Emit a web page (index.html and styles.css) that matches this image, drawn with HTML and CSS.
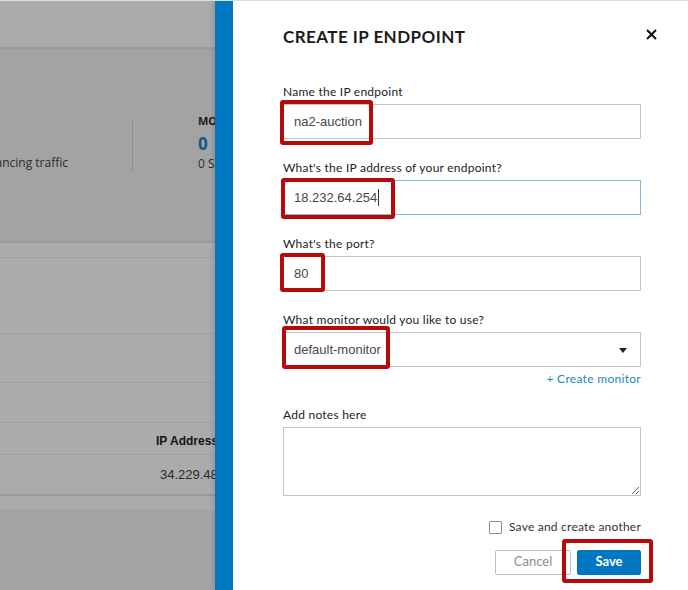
FILE: index.html
```html
<!DOCTYPE html>
<html lang="en">
<head>
<meta charset="utf-8">
<title>Create IP Endpoint</title>
<link rel="stylesheet" href="styles.css">
</head>
<body>
<div class="app">
  <div class="backdrop">
    <div class="bd-header"></div>
    <div class="bd-stats">
      <div class="stat stat-first"><span class="stat-sub">Load balancing traffic</span></div>
      <div class="stat stat-second">
        <div class="stat-title">MONITORS</div>
        <div class="stat-num">0</div>
        <div class="stat-sub">0 Servers</div>
      </div>
    </div>
    <div class="bd-band"></div>
    <div class="bd-sec bd-sec-a"></div>
    <div class="bd-sec bd-sec-b"></div>
    <div class="bd-sec bd-sec-c"></div>
    <div class="bd-thead"><span class="th">IP Address</span></div>
    <div class="bd-trow"><span class="td">34.229.48.110</span></div>
    <div class="bd-band bd-band-2"></div>
    <div class="bd-bottom"></div>
  </div>

  <aside class="panel">
    <div class="panel-header">
      <h1 class="panel-title">CREATE IP ENDPOINT</h1>
      <button class="close" type="button" aria-label="Close">
        <svg width="11" height="11" viewBox="0 0 11 11"><path d="M1 1 L10 10 M10 1 L1 10" stroke="#111" stroke-width="2" fill="none"/></svg>
      </button>
    </div>

    <div class="form">
      <div class="field">
        <div class="label">Name the IP endpoint</div>
        <div class="input">na2-auction<span class="mark mark-1"></span></div>
      </div>
      <div class="field">
        <div class="label">What's the IP address of your endpoint?</div>
        <div class="input input-focus">18.232.64.254<span class="caret"></span><span class="mark mark-2"></span></div>
      </div>
      <div class="field">
        <div class="label">What's the port?</div>
        <div class="input">80<span class="mark mark-3"></span></div>
      </div>
      <div class="field field-select">
        <div class="label">What monitor would you like to use?</div>
        <div class="input select">
          <span>default-monitor</span>
          <svg class="tri" width="8" height="5" viewBox="0 0 8 5"><path d="M0 0 H8 L4 5 Z" fill="#222"/></svg>
          <span class="mark mark-4"></span>
        </div>
        <div class="link-row"><span class="link">+ Create monitor</span></div>
      </div>
      <div class="field field-notes">
        <div class="label">Add notes here</div>
        <textarea class="notes"></textarea>
      </div>
      <div class="check-row">
        <span class="checkbox"></span>
        <span class="check-label">Save and create another</span>
      </div>
      <div class="btn-row">
        <button class="btn btn-cancel" type="button">Cancel</button>
        <button class="btn btn-save" type="button">Save<span class="mark mark-5"></span></button>
      </div>
    </div>
  </aside>
</div>
</body>
</html>
```

FILE: styles.css
```css
* { box-sizing: border-box; }

html, body {
  margin: 0;
  padding: 0;
  height: 590px;
  overflow: hidden;
}

body {
  border-top: 1px solid #dedede;
  background: #ffffff;
  font-family: "Lato", "Open Sans", sans-serif;
}

.app {
  display: flex;
  height: 589px;
}

/* ---------- dimmed page behind the panel ---------- */
.backdrop {
  width: 215px;
  flex: none;
  overflow: hidden;
  display: flex;
  flex-direction: column;
  background: #ababab;
  font-family: "Open Sans", sans-serif;
  color: #2c2c2c;
}

.bd-header {
  height: 48px;
  flex: none;
  background: #ababab;
  border-bottom: 2px solid #9b9b9b;
}

.bd-stats {
  height: 194px;
  flex: none;
  background: #a3a3a3;
  border-bottom: 2px solid #999999;
  display: flex;
  align-items: flex-start;
  padding-top: 65px;
}

.stat-first {
  width: 133px;
  flex: none;
  height: 51px;
  margin-top: 6px;
  border-right: 1px solid #8d8d8d;
  padding-right: 64px;
  display: flex;
  justify-content: flex-end;
  align-items: flex-end;
  white-space: nowrap;
}

.stat-second {
  margin-left: 65px;
  white-space: nowrap;
}

.stat-title {
  font-size: 11px;
  line-height: 14px;
  font-weight: 700;
  color: #1c1c1c;
}

.stat-num {
  font-size: 17px;
  line-height: 20px;
  font-weight: 700;
  color: #0e5a8e;
  margin-top: 6px;
}

.stat-sub {
  font-size: 12px;
  line-height: 16px;
  color: #2c2c2c;
}

.stat-second .stat-sub { margin-top: 2px; }

.bd-band {
  height: 15px;
  flex: none;
  background: #ababab;
  border-bottom: 1px solid #9f9f9f;
}

.bd-sec {
  flex: none;
  background: #ababab;
  border-bottom: 1px solid #9f9f9f;
}
.bd-sec-a { height: 76px; }
.bd-sec-b { height: 49px; }
.bd-sec-c { height: 40px; }

.bd-thead {
  height: 32px;
  flex: none;
  border-bottom: 1px solid #9f9f9f;
  padding: 8px 0 0 156px;
  white-space: nowrap;
  font-family: "Liberation Sans", Arial, sans-serif;
}

.th {
  font-size: 12px;
  line-height: 15px;
  font-weight: 700;
  color: #141414;
}

.bd-trow {
  height: 41px;
  flex: none;
  border-bottom: 2px solid #9a9a9a;
  padding: 10px 0 0 160px;
  white-space: nowrap;
  font-family: "Liberation Sans", Arial, sans-serif;
}

.td {
  font-size: 13px;
  line-height: 15px;
  color: #2a2a2a;
}

.bd-band-2 { height: 15px; }

.bd-bottom {
  flex: 1;
  background: #a3a3a3;
}

/* ---------- side panel ---------- */
.panel {
  flex: 1;
  background: #ffffff;
  border-left: 18px solid #0077c0;
  box-shadow: -2px 0 4px rgba(0, 0, 0, 0.12);
  padding: 26px 47px 0 50px;
  color: #222222;
}

.panel-header {
  display: flex;
  justify-content: space-between;
  align-items: flex-start;
  height: 20px;
}

.panel-title {
  margin: 0;
  font-size: 17px;
  line-height: 20px;
  font-weight: 700;
  letter-spacing: 0.45px;
  color: #1b1b1b;
}

.close {
  border: 0;
  background: none;
  padding: 0;
  margin: 2px -16px 0 0;
  width: 11px;
  height: 11px;
  display: block;
  cursor: pointer;
}
.close svg { display: block; }

.form { margin-top: 37px; }

.field { margin-bottom: 21px; }

.label {
  font-size: 12px;
  line-height: 16px;
  letter-spacing: 0.24px;
  color: #222222;
  margin-bottom: 4px;
}

.input {
  position: relative;
  height: 35px;
  border: 1px solid #c6c6c6;
  padding: 0 10px;
  display: flex;
  align-items: center;
  font-family: "Liberation Sans", Arial, sans-serif;
  font-size: 13px;
  color: #474747;
  background: #ffffff;
}

.input-focus { border-color: #86b8dc; }

.caret {
  width: 1px;
  height: 17px;
  background: #333333;
  margin-left: 1px;
}

.select {
  justify-content: space-between;
  padding-right: 13px;
}
.tri { display: block; margin-top: 2px; }

.field-select { margin-bottom: 20px; }

.link-row {
  margin-top: 4px;
  display: flex;
  justify-content: flex-end;
}
.link {
  font-size: 12px;
  line-height: 16px;
  letter-spacing: 0.3px;
  color: #1a86c9;
}

.field-notes { margin-bottom: 0; }

.notes {
  display: block;
  width: 100%;
  height: 69px;
  border: 1px solid #c6c6c6;
  border-radius: 0;
  margin: 0;
  resize: vertical;
  font-family: inherit;
  font-size: 13px;
  outline: none;
}

.check-row {
  margin-top: 23px;
  display: flex;
  justify-content: flex-end;
  align-items: center;
  gap: 7px;
  height: 16px;
}

.checkbox {
  width: 13px;
  height: 13px;
  border: 1px solid #8f8f8f;
  border-radius: 1px;
  background: #fff;
}

.check-label {
  font-size: 12px;
  line-height: 16px;
  letter-spacing: 0.22px;
  color: #333333;
}

.btn-row {
  margin-top: 15px;
  display: flex;
  justify-content: flex-end;
  gap: 6px;
}

.btn {
  position: relative;
  height: 25px;
  border-radius: 2px;
  font-family: inherit;
  font-size: 13px;
  line-height: 21px;
  padding: 0 0 2px;
  cursor: pointer;
}

.btn-cancel {
  width: 76px;
  background: #ffffff;
  border: 1px solid #bdbdbd;
  color: #8e8e8e;
}

.btn-save {
  width: 64px;
  background: #0077c0;
  border: 1px solid #0077c0;
  color: #ffffff;
  font-weight: 700;
}

/* ---------- red annotation boxes ---------- */
.mark {
  position: absolute;
  border: 4px solid #b60a0a;
  border-radius: 3px;
  pointer-events: none;
}
.mark-1 { left: -4px; top: -5px; width: 93px; height: 45px; }
.mark-2 { left: -3px; top: -3px; width: 114px; height: 41px; }
.mark-3 { left: -4px; top: -4px; width: 45px; height: 39px; }
.mark-4 { left: -2px; top: -7px; width: 108px; height: 43px; }
.mark-5 { left: -16px; top: -12px; width: 91px; height: 44px; }
```
